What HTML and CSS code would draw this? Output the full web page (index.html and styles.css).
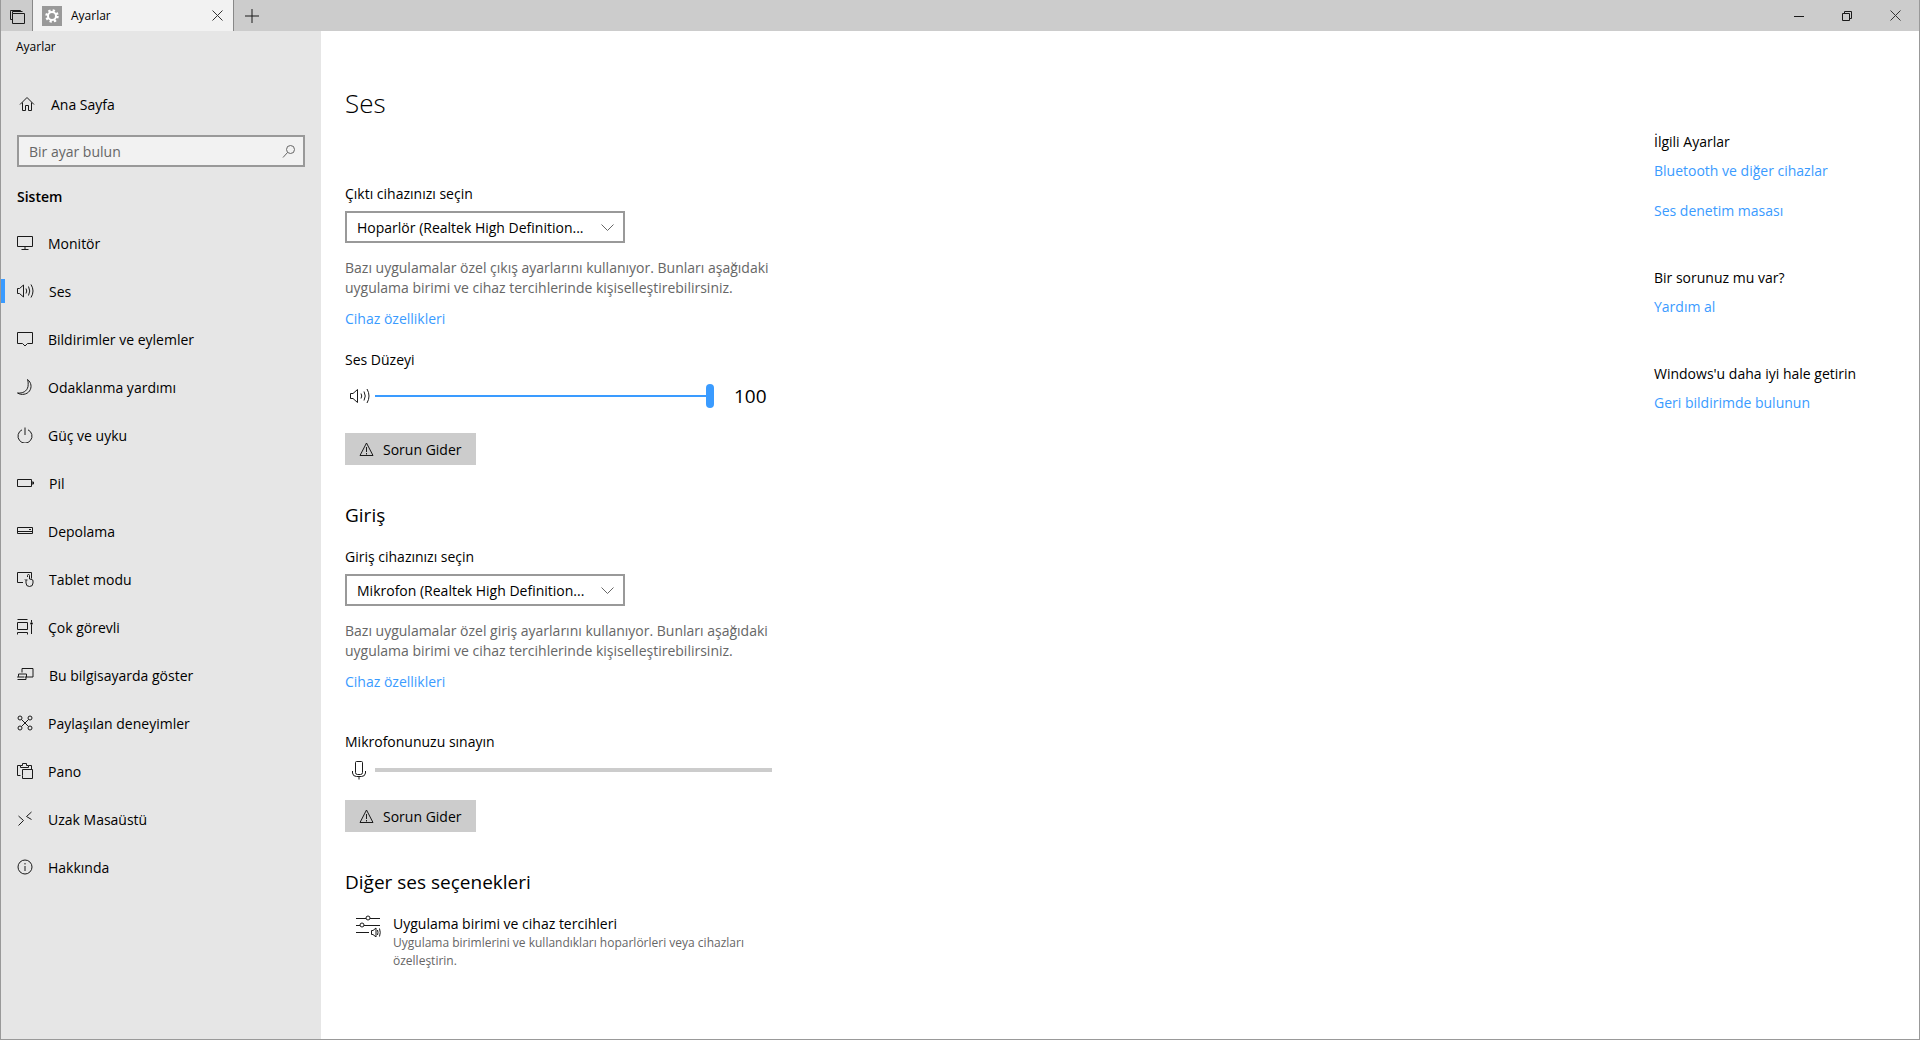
FILE: index.html
```html
<!DOCTYPE html>
<html lang="tr">
<head>
    <meta charset="UTF-8">
    <title>Ayarlar</title>
    <link rel="stylesheet" href="styles.css">
</head>
<body>
    <!-- title bar -->
    <div class="titlebar">
        <div class="task-btn">
            <svg width="16" height="16" viewBox="0 0 16 16"><path d="M3.5 4.5v-2h10M1.500 6.500v-4h0M1.500 2.500v8h2M3.500 4.500h12v10h-12z" class="ln"/><path d="M1.500 2.500v-1h10v1" class="ln"/></svg>
        </div>
        <div class="tab">
            <div class="tab-icon">
                <svg width="20" height="20" viewBox="0 0 20 20"><circle cx="10" cy="10" r="5.500" fill="none" stroke="#fff" stroke-width="2.500" stroke-dasharray="2.200 2.120"/><circle cx="10" cy="10" r="4" fill="none" stroke="#fff" stroke-width="2"/></svg>
            </div>
            <span class="tab-title">Ayarlar</span>
            <svg class="tab-close" width="11" height="11" viewBox="0 0 11 11"><path d="M.5.500l10 10M10.500.500l-10 10" class="ln thin"/></svg>
        </div>
        <svg class="tab-add" width="14" height="14" viewBox="0 0 14 14"><path d="M7 0v14M0 7h14" class="ln"/></svg>
        <div class="win-controls">
            <svg width="10" height="10" viewBox="0 0 10 10"><path d="M0 5.500h10" class="ln"/></svg>
            <svg width="10" height="10" viewBox="0 0 10 10"><path d="M.5 2.500h7v7h-7zM2.500 2.500v-2h7v7h-2" class="ln"/></svg>
            <svg width="11" height="11" viewBox="0 0 11 11"><path d="M.5.500l10 10M10.500.500l-10 10" class="ln thin"/></svg>
        </div>
    </div>

    <div class="main">
        <!-- side menu -->
        <div class="sidebar">
            <div class="app-name">Ayarlar</div>
            <a class="home-row">
                <svg width="16" height="16" viewBox="0 0 16 16"><path d="M1 8.500l7-7 7 7M3.500 6.500v8h3v-5h3v5h3v-8" class="ln"/></svg>
                <span>Ana Sayfa</span>
            </a>
            <div class="search">
                <span>Bir ayar bulun</span>
                <svg width="14" height="14" viewBox="0 0 14 14"><circle cx="8.500" cy="5.500" r="4" class="ln grey"/><path d="M5.500 8.500l-4.500 5" class="ln grey"/></svg>
            </div>
            <div class="group-title">Sistem</div>
            <a class="nav-row">
                <svg width="16" height="16" viewBox="0 0 16 16"><path d="M.5 1.500h15v10h-15zM8 11.500v3M4.500 14.500h7" class="ln"/></svg>
                <span>Monitör</span>
            </a>
            <a class="nav-row active">
                <svg width="17" height="16" viewBox="0 0 17 16"><path d="M.5 5.500h2l4-3.500v12l-4-3.500h-2zM9 5.500q1.500 2.500 0 5M11.500 3.500q2.500 4.500 0 9M14 1.500q4 6.500 0 13" class="ln"/></svg>
                <span>Ses</span>
            </a>
            <a class="nav-row">
                <svg width="16" height="16" viewBox="0 0 16 16"><path d="M.5 1.500h15v11h-5l-2.500 2.500-2.500-2.500h-5z" class="ln"/></svg>
                <span>Bildirimler ve eylemler</span>
            </a>
            <a class="nav-row">
                <svg width="16" height="16" viewBox="0 0 16 16"><path d="M10.500.5c4 3 4.500 8 2 11.500s-8 4.500-12 2c5 .5 9.500-1.500 10.500-6.500.300-2.500.300-5-.500-7z" class="ln"/></svg>
                <span>Odaklanma yardımı</span>
            </a>
            <a class="nav-row">
                <svg width="16" height="16" viewBox="0 0 16 16"><path d="M5 2.800a7 7 0 1 0 6 0M8 .5v7.500" class="ln"/></svg>
                <span>Güç ve uyku</span>
            </a>
            <a class="nav-row">
                <svg width="17" height="16" viewBox="0 0 17 16"><path d="M.5 4.500h14v7h-14zM15 7v2h1.500V7z" class="ln"/></svg>
                <span>Pil</span>
            </a>
            <a class="nav-row">
                <svg width="16" height="16" viewBox="0 0 16 16"><path d="M.5 4.500h15v6h-15zM1 8.500h14M12 6.500h2" class="ln"/></svg>
                <span>Depolama</span>
            </a>
            <a class="nav-row">
                <svg width="17" height="16" viewBox="0 0 17 16"><path d="M6 11.500H.5v-10h14v6M10.500 6V4.500a1 1 0 0 1 2 0V8l2.500.5q1 .3 1 1.500v2a3.500 3.500 0 0 1-7 0V9.500l-1-1M8.500 9l2 0" class="ln"/></svg>
                <span>Tablet modu</span>
            </a>
            <a class="nav-row">
                <svg width="16" height="16" viewBox="0 0 16 16"><path d="M.5.500h10M.5 15.500v-2h10v2M.5 3.500h10v7h-10zM.5 13.500M14.500 1v2M14.500 6v9" class="ln"/><circle cx="14.500" cy="4.500" r="1.200"/></svg>
                <span>Çok görevli</span>
            </a>
            <a class="nav-row">
                <svg width="17" height="16" viewBox="0 0 17 16"><path d="M5 5.500v-4h11v8.500h-8M7.500 10H.5l1-.5V7h8v3M.5 12.500h8.500V10" class="ln"/></svg>
                <span>Bu bilgisayarda göster</span>
            </a>
            <a class="nav-row">
                <svg width="16" height="16" viewBox="0 0 16 16"><circle cx="3" cy="3" r="2" class="ln"/><circle cx="13" cy="3" r="2" class="ln"/><circle cx="3" cy="13" r="2" class="ln"/><circle cx="13" cy="13" r="2" class="ln"/><path d="M4.500 4.500l7 7M11.500 4.500l-7 7" class="ln"/></svg>
                <span>Paylaşılan deneyimler</span>
            </a>
            <a class="nav-row">
                <svg width="16" height="16" viewBox="0 0 16 16"><path d="M3.500 12.500h-3v-10h3M11.500 2.500h3v4M5.500 6.500h10v9h-10v-3M5.500 6.500v6M3.500 4.500h8v-2h-2v-2h-4v2h-2z" class="ln"/></svg>
                <span>Pano</span>
            </a>
            <a class="nav-row">
                <svg width="16" height="16" viewBox="0 0 16 16"><path d="M1.500 5l5 4.500-5 5M14.500 1l-5 4.500 5 3" class="ln"/></svg>
                <span>Uzak Masaüstü</span>
            </a>
            <a class="nav-row">
                <svg width="16" height="16" viewBox="0 0 16 16"><circle cx="8" cy="8" r="7" class="ln"/><path d="M8 7v5M8 4v1.500" class="ln"/></svg>
                <span>Hakkında</span>
            </a>
        </div>

        <!-- settings content -->
        <div class="content">
            <h1>Ses</h1>

            <div class="label first">Çıktı cihazınızı seçin</div>
            <div class="select">
                <span>Hoparlör (Realtek High Definition...</span>
                <svg width="13" height="7" viewBox="0 0 13 7"><path d="M.5.500l6 6 6-6" class="ln grey"/></svg>
            </div>
            <p class="desc">Bazı uygulamalar özel çıkış ayarlarını kullanıyor. Bunları aşağıdaki uygulama birimi ve cihaz tercihlerinde kişiselleştirebilirsiniz.</p>
            <a class="link dev-link">Cihaz özellikleri</a>

            <div class="label vol-label">Ses Düzeyi</div>
            <div class="slider-row">
                <svg width="21" height="16" viewBox="0 0 21 16"><path d="M.5 5.500h2.500l4.500-4v13l-4.500-4H.5zM11 5.500q1.500 2.500 0 5M14 3.500q2.500 4.500 0 9M17 1q4 7 0 14" class="ln"/></svg>
                <div class="slider">
                    <div class="thumb"></div>
                </div>
                <span class="vol-value">100</span>
            </div>
            <button class="fix-btn">
                <svg width="15" height="14" viewBox="0 0 15 14"><path d="M7.500 1l6.500 12.500H1zM7.500 5v5M7.500 11v1.500" class="ln"/></svg>
                Sorun Gider
            </button>

            <h2>Giriş</h2>
            <div class="label after-h2">Giriş cihazınızı seçin</div>
            <div class="select">
                <span>Mikrofon (Realtek High Definition...</span>
                <svg width="13" height="7" viewBox="0 0 13 7"><path d="M.5.500l6 6 6-6" class="ln grey"/></svg>
            </div>
            <p class="desc">Bazı uygulamalar özel giriş ayarlarını kullanıyor. Bunları aşağıdaki uygulama birimi ve cihaz tercihlerinde kişiselleştirebilirsiniz.</p>
            <a class="link dev-link">Cihaz özellikleri</a>

            <div class="label mic-label">Mikrofonunuzu sınayın</div>
            <div class="mic-row">
                <svg width="14" height="20" viewBox="0 0 14 20"><path d="M4.500 1.500h5a1 1 0 0 1 1 1v10a2 2 0 0 1-2 2h-3a2 2 0 0 1-2-2v-10a1 1 0 0 1 1-1zM.5 11v2a4 4 0 0 0 4 3.500h5a4 4 0 0 0 4-3.500v-2M7 16.500v3" class="ln"/></svg>
                <div class="mic-track"></div>
            </div>
            <button class="fix-btn mic-fix">
                <svg width="15" height="14" viewBox="0 0 15 14"><path d="M7.500 1l6.500 12.500H1zM7.500 5v5M7.500 11v1.500" class="ln"/></svg>
                Sorun Gider
            </button>

            <h2>Diğer ses seçenekleri</h2>
            <div class="option">
                <svg width="25" height="23" viewBox="0 0 25 23"><path d="M0 4.500h10M14 4.500h10M0 11.500h4M8 11.500h16M0 18.500h13" class="ln"/><circle cx="12" cy="4" r="2" class="ln"/><circle cx="6" cy="11" r="2" class="ln"/><path d="M15.500 16.500h1.500l3-2.500v9l-3-2.500h-1.500zM21.500 16q1 2.500 0 5M23.500 14.500q1.500 4 0 8" class="ln"/></svg>
                <div class="option-text">
                    <div class="option-title">Uygulama birimi ve cihaz tercihleri</div>
                    <div class="option-desc">Uygulama birimlerini ve kullandıkları hoparlörleri veya cihazları özelleştirin.</div>
                </div>
            </div>
        </div>

        <!-- related links -->
        <div class="related">
            <div class="rel-title">İlgili Ayarlar</div>
            <a class="link rel-link">Bluetooth ve diğer cihazlar</a>
            <a class="link rel-link second">Ses denetim masası</a>
            <div class="rel-title spaced">Bir sorunuz mu var?</div>
            <a class="link rel-link">Yardım al</a>
            <div class="rel-title spaced">Windows'u daha iyi hale getirin</div>
            <a class="link rel-link">Geri bildirimde bulunun</a>
        </div>
    </div>
</body>
</html>
```

FILE: styles.css
```css
* {
    box-sizing: border-box;
}

html, body {
    height: 100%;
}

body {
    margin: 0;
    font-family: "Open Sans", "Noto Sans", sans-serif;
    font-size: 14px;
    color: #000;
    background: #fff;
    display: flex;
    flex-direction: column;
    overflow: hidden;
    border-left: 1px solid #999;
    border-right: 1px solid #999;
    border-bottom: 1px solid #999;
}

svg {
    display: block;
    flex-shrink: 0;
}

.ln {
    fill: none;
    stroke: #1a1a1a;
    stroke-width: 1;
}

.ln.thin {
    stroke: #333;
}

.ln.grey {
    stroke: #666;
}

/* title bar */
.titlebar {
    height: 31px;
    flex-shrink: 0;
    background: #ccc;
    display: flex;
    align-items: center;
}

.task-btn {
    width: 32px;
    height: 31px;
    padding: 9px 0 0 8px;
    border-right: 1px solid #888;
}

.tab {
    width: 201px;
    height: 31px;
    background: #f2f2f2;
    border-right: 1px solid #888;
    display: flex;
    align-items: center;
    padding-left: 9px;
}

.tab-icon {
    width: 20px;
    height: 20px;
    background: #999;
}

.tab-title {
    font-size: 12px;
    margin-left: 9px;
    flex-grow: 1;
}

.tab-close {
    margin-right: 10px;
}

.tab-add {
    margin-left: 11px;
}

.win-controls {
    margin-left: auto;
    margin-right: 18px;
    display: flex;
    align-items: center;
    gap: 38px;
}

/* layout */
.main {
    flex-grow: 1;
    display: flex;
    min-height: 0;
}

/* side menu */
.sidebar {
    width: 320px;
    flex-shrink: 0;
    background: #e6e6e6;
}

.app-name {
    height: 49px;
    padding: 6px 0 0 15px;
    font-size: 12px;
    line-height: 20px;
}

.home-row {
    height: 48px;
    display: flex;
    align-items: center;
    padding-left: 18px;
    gap: 16px;
    position: relative;
}

.search {
    height: 32px;
    margin: 7px 16px 0;
    border: 2px solid #999;
    background: #f2f2f2;
    color: #666;
    display: flex;
    align-items: center;
    justify-content: space-between;
    padding: 0 7px 0 10px;
}

.group-title {
    height: 52px;
    padding-top: 20px;
    padding-left: 16px;
    line-height: 20px;
    font-weight: 600;
}

.nav-row {
    height: 48px;
    display: flex;
    align-items: center;
    padding-left: 16px;
    position: relative;
}

.nav-row svg {
    margin-right: 15px;
}

.nav-row span {
    position: relative;
}

.nav-row.active::before {
    content: "";
    position: absolute;
    left: 0;
    top: 12px;
    width: 4px;
    height: 24px;
    background: #3a9bff;
}

/* settings content */
.content {
    flex-grow: 1;
    padding: 52px 0 0 24px;
}

h1 {
    margin: 0;
    font-size: 26px;
    font-weight: 300;
    line-height: 40px;
}

h2 {
    margin: 36px 0 0;
    font-size: 19px;
    font-weight: 400;
    line-height: 28px;
}

.label {
    line-height: 20px;
}

.label.first {
    margin-top: 61px;
}

.label.vol-label {
    margin-top: 21px;
}

.label.after-h2 {
    margin-top: 18px;
}

.label.mic-label {
    margin-top: 40px;
}

.select {
    width: 280px;
    height: 32px;
    margin-top: 7px;
    border: 2px solid #999;
    display: flex;
    align-items: center;
    justify-content: space-between;
    padding: 0 9px 0 10px;
}

.desc {
    width: 430px;
    margin: 15px 0 0;
    line-height: 20px;
    color: #666;
}

.link {
    display: block;
    line-height: 20px;
    color: #3a9bff;
}

.dev-link {
    margin-top: 11px;
}

.slider-row {
    height: 24px;
    margin-top: 14px;
    display: flex;
    align-items: center;
    padding-left: 5px;
}

.slider {
    width: 339px;
    height: 2px;
    margin-left: 4px;
    background: #3a9bff;
    position: relative;
}

.thumb {
    position: absolute;
    right: 0;
    top: -11px;
    width: 8px;
    height: 24px;
    border-radius: 4px;
    background: #3a9bff;
}

.vol-value {
    margin-left: 20px;
    font-size: 19px;
}

.fix-btn {
    width: 131px;
    height: 32px;
    margin-top: 25px;
    border: none;
    background: #ccc;
    font-family: inherit;
    font-size: 14px;
    color: #000;
    display: flex;
    align-items: center;
    padding: 0 0 0 14px;
    gap: 9px;
}

.mic-row {
    height: 20px;
    margin-top: 8px;
    display: flex;
    align-items: center;
    padding-left: 7px;
}

.mic-track {
    width: 397px;
    height: 4px;
    margin-left: 9px;
    background: #ccc;
}

.fix-btn.mic-fix {
    margin-top: 20px;
}

.option {
    display: flex;
    margin-top: 18px;
    padding-left: 11px;
}

.option-text {
    width: 405px;
    margin-left: 12px;
}

.option-title {
    line-height: 20px;
}

.option-desc {
    font-size: 12px;
    line-height: 18px;
    color: #666;
}

/* related links */
.related {
    width: 265px;
    flex-shrink: 0;
    padding-top: 101px;
}

.rel-title {
    line-height: 20px;
}

.rel-title.spaced {
    margin-top: 47px;
}

.rel-link {
    margin-top: 9px;
}

.rel-link.second {
    margin-top: 20px;
}
```
